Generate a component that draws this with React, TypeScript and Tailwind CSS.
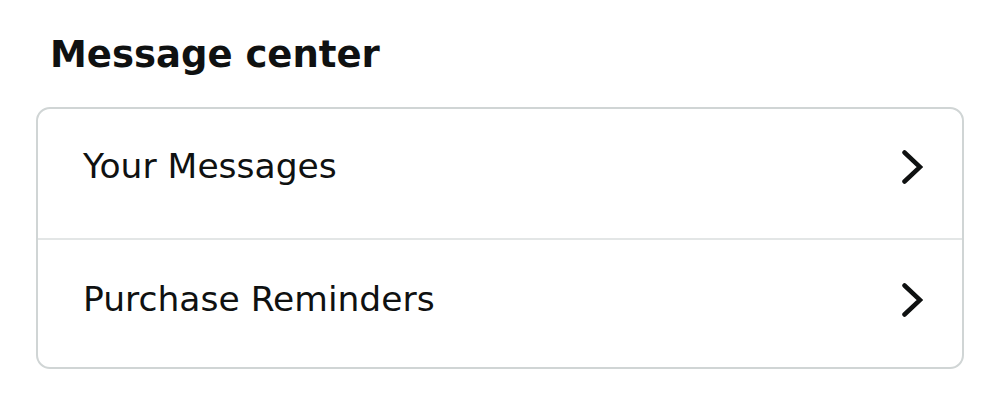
const ITEMS = [
  { label: "Your Messages", rowClass: "pb-[14px]" },
  { label: "Purchase Reminders", rowClass: "border-t-2 border-[#e3e6e6] pb-[8px]" },
];

function Chevron() {
  return (
    <svg width="22" height="36" viewBox="0 0 22 36" fill="none" aria-hidden="true">
      <path d="M3.5 3.5 L19 18 L3.5 32.5" stroke="#0f1111" strokeWidth="4.5" strokeLinecap="round" strokeLinejoin="miter" />
    </svg>
  );
}

export default function App() {
  return (
    <main className="min-h-[401px] w-[1002px] bg-white pt-[31px] text-[#0f1111] [font-family:'DejaVu_Sans',sans-serif]">
      <h1 className="pl-[50px] text-[37px] font-bold leading-[48px]">Message center</h1>
      <div className="mx-[36px] mt-[28px] w-[928px] overflow-hidden rounded-[14px] border-2 border-[#d0d5d5]">
        {ITEMS.map((item) => (
          <button
            className={`flex h-[129px] w-full items-center justify-between pl-[45px] pr-[39px] text-left ${item.rowClass}`}
            key={item.label}
            type="button"
          >
            <span className="text-[34.5px] leading-none">{item.label}</span>
            <Chevron />
          </button>
        ))}
      </div>
    </main>
  );
}
